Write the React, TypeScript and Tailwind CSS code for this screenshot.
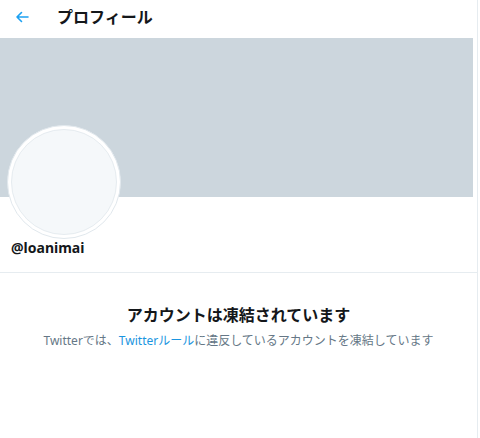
import React from "react";

export default function App() {
  return (
    <div
      className="w-[480px] h-[438px] bg-white overflow-hidden"
      style={{ fontFamily: '"Noto Sans", "Noto Sans CJK JP", sans-serif' }}
    >
      <div className="w-[478px] h-full border-r border-[#e6ecf0] flex flex-col">
        <div className="h-[38px] flex items-center pl-[15px] pb-[4px]">
          <svg width="14" height="12" viewBox="0 0 14 12" className="text-[#1da1f2]">
            <path d="M13 6H2M6.5 1.5L2 6l4.5 4.5" fill="none" stroke="currentColor" strokeWidth="1.6" strokeLinecap="round" strokeLinejoin="round" />
          </svg>
          <span className="ml-[28px] text-[16px] font-bold text-[#14171a] leading-none">プロフィール</span>
        </div>
        <div className="relative h-[159px] bg-[#ccd6dd] mr-[4px]">
          <div className="absolute left-[7px] top-[87px] w-[114px] h-[114px] rounded-full bg-white border border-[#e1e8ed] p-[3px]">
            <div className="w-full h-full rounded-full bg-[#f5f8fa] border border-[#e6ecf0]" />
          </div>
        </div>
        <div className="h-[76px] border-b border-[#e6ecf0] pl-[11px] pt-[42px]">
          <div className="text-[14px] font-bold text-[#14171a] leading-[18px]">@loanimai</div>
        </div>
        <div className="flex flex-col items-center pt-[31px]">
          <div className="text-[16px] font-bold text-[#14171a] leading-[22px]">アカウントは凍結されています</div>
          <div className="mt-[6px] text-[12px] text-[#657786] leading-[17px]">
            Twitterでは、<span className="text-[#1b95e0]">Twitterルール</span>に違反しているアカウントを凍結しています
          </div>
        </div>
      </div>
    </div>
  );
}
